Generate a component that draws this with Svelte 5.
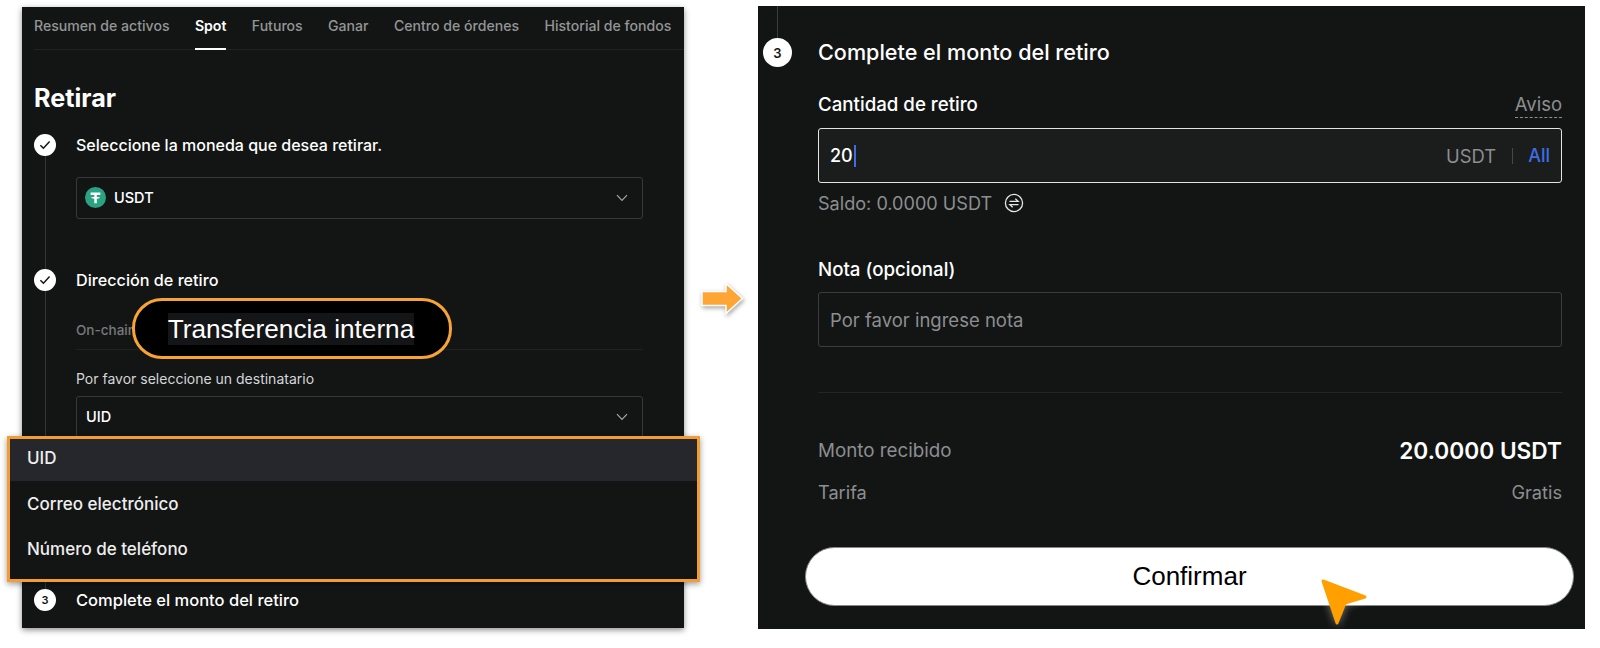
<script>
  const tabs = ['Resumen de activos', 'Spot', 'Futuros', 'Ganar', 'Centro de órdenes', 'Historial de fondos'];
  const options = ['UID', 'Correo electrónico', 'Número de teléfono'];
</script>

{#snippet chevron()}
  <svg class="chev" width="12" height="8" viewBox="0 0 12 8"><path d="M1 1.2 6 6.4 11 1.2" fill="none" stroke="#a4a6a8" stroke-width="1.2"/></svg>
{/snippet}
{#snippet check()}
  <span class="dot"><svg width="12" height="10" viewBox="0 0 12 10"><path d="M1.4 5.2 4.4 8.2 10.6 1.6" fill="none" stroke="#131515" stroke-width="1.5"/></svg></span>
{/snippet}

<div class="page">
  <section class="left">
    <nav class="tabs">
      {#each tabs as t, i}
        <span class="tab" class:on={i === 1}>{t}</span>
      {/each}
    </nav>
    <h1>Retirar</h1>

    <div class="step s1">
      <div class="rail">{@render check()}<i class="line"></i></div>
      <div>
        <div class="head first-head">Seleccione la moneda que desea retirar.</div>
        <div class="select coin">
          <svg width="21" height="21" viewBox="0 0 21 21"><circle cx="10.5" cy="10.5" r="10.5" fill="#2ba383"/><path d="M5.6 5.4h9.8v2.5h-3.6v2c1.7.1 3.2.4 3.2.9s-1.500.8-3.200.9v4.500H9.300v-4.500c-1.700-.1-3.200-.4-3.200-.9s1.500-.8 3.200-.9v-2H5.600z" fill="#fff"/></svg>
          <span class="val">USDT</span>
          {@render chevron()}
        </div>
      </div>
    </div>

    <div class="step s2">
      <div class="rail">{@render check()}<i class="line"></i></div>
      <div>
        <div class="head">Dirección de retiro</div>
        <div class="chain">On-chain</div>
        <div class="label">Por favor seleccione un destinatario</div>
        <div class="select"><span class="val">UID</span>{@render chevron()}</div>
      </div>
    </div>

    <div class="step">
      <div class="rail"><span class="dot num">3</span></div>
      <div class="head last-head">Complete el monto del retiro</div>
    </div>

    <div class="pill"><span>Transferencia interna</span></div>

    <div class="menu">
      {#each options as o, i}
        <div class="opt" class:first={i === 0}>{o}</div>
      {/each}
    </div>
  </section>

  <section class="right">
    <i class="topline"></i>
    <div class="rhead"><span class="bigdot">3</span><h2>Complete el monto del retiro</h2></div>
    <div class="form">
      <div class="between lab1">
        <span class="flabel">Cantidad de retiro</span>
        <span class="aviso">Aviso</span>
      </div>
      <div class="input active">
        <span class="typed">20</span><i class="caret"></i>
        <span class="unit">USDT</span><i class="sep"></i><span class="all">All</span>
      </div>
      <div class="saldo">
        <span>Saldo: 0.0000 USDT</span>
        <svg width="20" height="20" viewBox="0 0 20 20" fill="none" stroke="#e4e5e6" stroke-width="1.300"><circle cx="10" cy="10" r="8.600"/><path d="M5.500 8.300h8.600L11.300 5.700M14.500 11.700H5.900l2.800 2.600"/></svg>
      </div>
      <div class="flabel nota">Nota (opcional)</div>
      <div class="input note"><span>Por favor ingrese nota</span></div>
      <hr />
      <div class="between monto"><span>Monto recibido</span><b>20.0000 USDT</b></div>
      <div class="between tarifa"><span>Tarifa</span><span>Gratis</span></div>
      <button>Confirmar</button>
    </div>
  </section>

  <svg class="arrow" width="50" height="40" viewBox="0 0 50 40"><path d="M3 12.500H27V4.500L43.500 19.500 27 34.500V26.500H3z" fill="#ffa536" stroke="#fff" stroke-width="1.500"/></svg>
  <svg class="cursor" width="60" height="56" viewBox="0 0 60 56"><path d="M9 5 51 21 31 27 23 47z" fill="#ffa000" stroke="#ffa000" stroke-width="3" stroke-linejoin="round"/></svg>
</div>

<style>
  :global(body) { margin: 0; background: #fff; }
  * { box-sizing: border-box; }
  .page {
    position: relative;
    display: flex;
    align-items: flex-start;
    gap: 74px;
    width: 1600px;
    height: 648px;
    padding-left: 22px;
    overflow: hidden;
    font-family: Inter, "Liberation Sans", sans-serif;
    color: #fff;
  }
  .left {
    position: relative;
    width: 662px;
    height: 621px;
    margin-top: 7px;
    padding-left: 12px;
    background: #131515;
    box-shadow: 0 2px 6px rgba(0,0,0,.45);
  }
  .tabs {
    display: flex;
    gap: 25.400px;
    height: 42.500px;
    border-bottom: 1px solid #1f2122;
  }
  .tab {
    height: 42.500px;
    padding-top: 10px;
    font-size: 14.100px;
    line-height: 18px;
    font-weight: 500;
    color: #939597;
    white-space: nowrap;
  }
  .tab.on { color: #fff; font-weight: 600; border-bottom: 2px solid #fff; }
  h1 {
    margin: 32px 0 0;
    font-size: 25.200px;
    line-height: 32px;
    font-weight: 700;
  }
  .step { display: grid; grid-template-columns: 42px 1fr; }
  .s1 { margin-top: 20px; height: 135px; }
  .s2 { height: 320px; }
  .rail { display: flex; flex-direction: column; width: 22px; align-items: center; }
  .line { flex: 1; width: 1px; background: #34363a; }
  .dot {
    flex: none;
    display: flex;
    align-items: center;
    justify-content: center;
    width: 22px;
    height: 22px;
    border-radius: 50%;
    background: #fff;
  }
  .num { color: #131515; font-size: 11px; font-weight: 600; }
  .head { font-size: 16.200px; line-height: 22px; font-weight: 500; white-space: nowrap; }
  .first-head { font-size: 16px; }
  .last-head { font-size: 16.500px; }
  .select {
    display: flex;
    align-items: center;
    width: 567px;
    height: 42px;
    padding: 0 14px 0 9px;
    border: 1px solid #36383c;
    border-radius: 3px;
    font-size: 14.500px;
    font-weight: 500;
  }
  .coin { margin-top: 21px; gap: 8px; padding-left: 8px; }
  .val { flex: 1; }
  .chain {
    width: 567px;
    margin-top: 29px;
    height: 30px;
    font-size: 13.500px;
    line-height: 20px;
    font-weight: 500;
    color: #77797c;
    border-bottom: 1px solid #1f2122;
  }
  .label { margin: 20px 0 8px; font-size: 14px; line-height: 18px; color: #d5d6d7; }
  .pill {
    position: absolute;
    left: 110px;
    top: 291px;
    display: flex;
    align-items: center;
    justify-content: center;
    width: 320px;
    height: 61px;
    padding-right: 2px;
    border: 3px solid #f7a336;
    border-radius: 30px;
    background: #000;
  }
  .pill span {
    font-family: "Liberation Sans", sans-serif;
    font-size: 26.200px;
    line-height: 32px;
    background: #141516;
  }
  .menu {
    position: absolute;
    left: -15px;
    top: 429px;
    width: 693px;
    height: 146px;
    border: 3.500px solid #f29c31;
    background: #131515;
    box-shadow: 0 2px 6px rgba(0,0,0,.4);
  }
  .opt { height: 44.500px; padding-left: 17px; font-size: 17px; line-height: 46px; font-weight: 500; color: #eee; }
  .opt.first { height: 42px; line-height: 39px; background: #26272c; }

  .right {
    width: 827px;
    height: 623px;
    margin-top: 6px;
    padding: 0 23px 0 5px;
    background: #131515;
  }
  .topline { display: block; width: 1px; height: 32px; margin-left: 14px; background: #3a3c40; }
  .rhead { display: flex; align-items: center; gap: 26px; height: 29px; }
  .bigdot {
    display: flex;
    align-items: center;
    justify-content: center;
    width: 29px;
    height: 29px;
    border-radius: 50%;
    background: #fff;
    color: #131515;
    font-size: 13px;
    font-weight: 600;
  }
  h2 { margin: -2px 0 0; font-size: 21.600px; line-height: 28px; font-weight: 500; white-space: nowrap; }
  .form { margin-left: 55px; }
  .between { display: flex; justify-content: space-between; align-items: center; }
  .lab1 { margin-top: 25px; height: 26px; }
  .flabel { font-size: 18.700px; line-height: 24px; font-weight: 500; }
  .aviso {
    font-size: 18.500px;
    line-height: 24px;
    color: #8c8e90;
    border-bottom: 1px dashed #8c8e90;
    padding-bottom: 1px;
  }
  .input {
    display: flex;
    align-items: center;
    height: 55px;
    padding: 0 11px;
    border-radius: 3px;
    font-size: 18px;
  }
  .active { margin-top: 10px; border: 1px solid #e2e3e3; background: #1b1c1c; }
  .typed { font-weight: 500; }
  .caret { width: 2px; height: 22px; margin-left: 1px; background: #3c6fe6; }
  .unit { margin-left: auto; color: #8c8e90; font-size: 18.400px; }
  .sep { width: 1px; height: 16px; margin: 0 15px 0 16px; background: #45474a; }
  .all { color: #3c6fe6; font-weight: 500; }
  .saldo {
    display: flex;
    align-items: center;
    gap: 12px;
    height: 22px;
    margin-top: 9px;
    font-size: 18.100px;
    color: #8c8e90;
  }
  .nota { margin-top: 44px; }
  .note { height: 55px; margin-top: 10px; border: 1px solid #3a3c40; color: #8c8e90; font-size: 18.500px; }
  hr { height: 1px; margin: 45px 0 0; border: 0; background: #222425; }
  .monto { margin-top: 42px; height: 30px; font-size: 18.800px; color: #8c8e90; }
  .monto b { font-size: 22.700px; font-weight: 600; color: #fff; }
  .tarifa { margin-top: 15px; height: 24px; font-size: 18.200px; color: #8c8e90; }
  button {
    display: block;
    width: 769px;
    height: 59px;
    margin: 43px 0 0 -13px;
    padding: 0;
    border: 1px solid #888;
    border-radius: 29.500px;
    background: #fff;
    color: #000;
    font-family: "Liberation Sans", sans-serif;
    font-size: 26px;
  }
  .arrow { position: absolute; left: 699px; top: 279px; filter: drop-shadow(1px 2px 2px rgba(0,0,0,.35)); }
  .cursor { position: absolute; left: 1314px; top: 576px; filter: drop-shadow(0 0 4px rgba(255,255,255,.45)); }
</style>
